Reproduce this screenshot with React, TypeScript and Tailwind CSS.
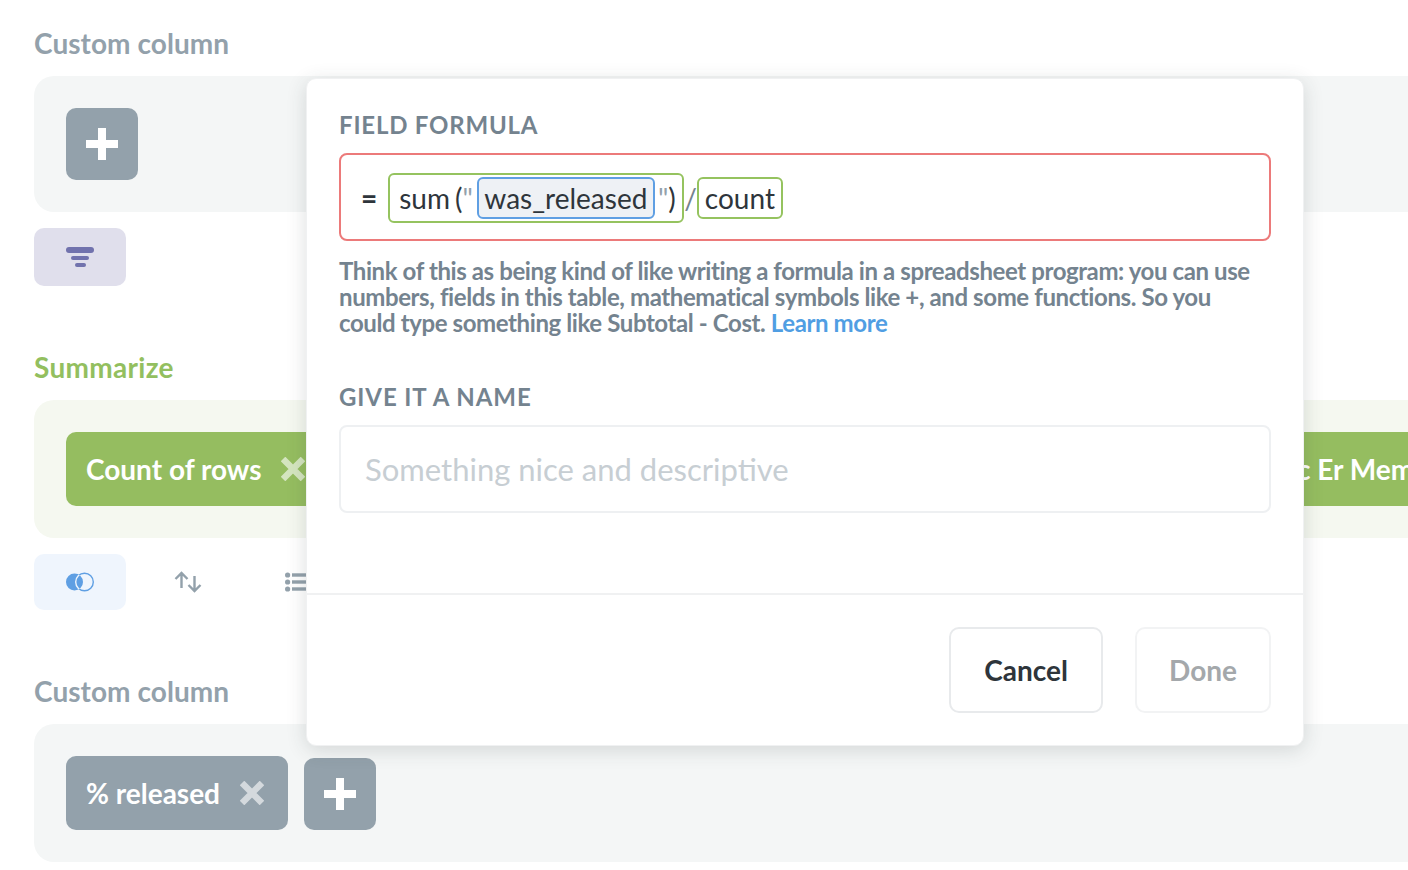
function PlusButton() {
  return (
    <button className="flex h-[72px] w-[72px] shrink-0 items-center justify-center rounded-[10px] bg-[#93a1ab] text-white">
      <svg width="32" height="32" viewBox="0 0 32 32" fill="currentColor">
        <path d="M12 0h8v12h12v8H20v12h-8V20H0v-8h12z" />
      </svg>
    </button>
  );
}

function CloseIcon({ className }: { className: string }) {
  return (
    <svg width="24" height="24" viewBox="0 0 24 24" className={className} fill="none" stroke="currentColor" strokeWidth="6.5">
      <path d="M2 2l20 20M22 2L2 22" />
    </svg>
  );
}

function Chip({ label, color, width }: { label: string; color: string; width: string }) {
  return (
    <div className={`flex h-[74px] shrink-0 items-center rounded-[10px] pl-5 text-[28px] font-bold text-white ${color} ${width}`}>
      <span className="whitespace-nowrap">{label}</span>
      <CloseIcon className="ml-5 shrink-0 text-white/60" />
    </div>
  );
}

function SectionLabel({ children, color }: { children: string; color: string }) {
  return <h2 className={`text-[28px] font-bold leading-8 ${color}`}>{children}</h2>;
}

export default function App() {
  return (
    <div className="relative h-[870px] w-[1408px] overflow-hidden bg-white font-['Lato','Noto_Sans',sans-serif]">
      <div className="flex flex-col pl-[34px] pt-[27px]">
        <SectionLabel color="text-[#93a1ab] tracking-[0.06px]">Custom column</SectionLabel>
        <div className="mt-[17px] h-[136px] rounded-l-[20px] bg-[#f4f6f6] p-8">
          <PlusButton />
        </div>
        <button className="mt-4 flex h-[58px] w-[92px] flex-col items-center justify-center gap-[3px] rounded-[10px] bg-[#e0dfec]">
          <span className="h-[6px] w-7 rounded-full bg-[#7172ad]" />
          <span className="h-1 w-[18px] rounded-full bg-[#7172ad]" />
          <span className="h-1 w-[11px] rounded-full bg-[#7172ad]" />
        </button>

        <div className="mt-[65px]">
          <SectionLabel color="text-[#93bf5f] tracking-[0.3px]">Summarize</SectionLabel>
        </div>
        <div className="mt-[17px] flex h-[138px] gap-4 overflow-hidden rounded-l-[20px] bg-[#f5f8f0] p-8">
          <Chip label="Count of rows" color="bg-[#95bd60]" width="w-[640px]" />
          <div className="flex h-[74px] w-[800px] shrink-0 items-center rounded-[10px] bg-[#95bd60] pl-[575px] text-[28px] font-bold text-white">
            <span className="whitespace-nowrap">c Er Members</span>
          </div>
        </div>
        <div className="mt-4 flex h-14 items-center text-[#93a1ab]">
          <button className="flex h-14 w-[92px] items-center justify-center rounded-[10px] bg-[#eff5fd]">
            <svg width="30" height="20" viewBox="0 0 30 20">
              <defs>
                <clipPath id="venn-left">
                  <circle cx="9.5" cy="10" r="8.5" />
                </clipPath>
              </defs>
              <circle cx="9.5" cy="10" r="8.5" fill="#5f9fe3" />
              <circle cx="19.5" cy="10" r="8.8" fill="none" stroke="#5f9fe3" strokeWidth="1.4" />
              <circle cx="19.5" cy="10" r="8.8" fill="none" stroke="#eff5fd" strokeWidth="1.4" clipPath="url(#venn-left)" />
            </svg>
          </button>
          <button className="ml-4 flex h-14 w-[92px] items-center justify-center">
            <svg width="28" height="22" viewBox="0 0 28 22" fill="none" stroke="currentColor" strokeWidth="2.4">
              <path d="M7.5 17V2M1.5 8l6-6 6 6" />
              <path d="M20.5 5v15M14.5 14l6 6 6-6" />
            </svg>
          </button>
          <svg width="24" height="20" viewBox="0 0 24 20" fill="currentColor" className="ml-[51px]">
            <circle cx="2.6" cy="3" r="2.6" />
            <circle cx="2.6" cy="10" r="2.6" />
            <circle cx="2.6" cy="17" r="2.6" />
            <rect x="7" y="1.3" width="17" height="3.4" />
            <rect x="7" y="8.3" width="17" height="3.4" />
            <rect x="7" y="15.3" width="17" height="3.4" />
          </svg>
        </div>

        <div className="mt-[65px]">
          <SectionLabel color="text-[#93a1ab] tracking-[0.06px]">Custom column</SectionLabel>
        </div>
        <div className="mt-[17px] flex h-[138px] items-end gap-4 rounded-l-[20px] bg-[#f4f6f6] px-8 pb-8">
          <Chip label="% released" color="bg-[#93a1ab]" width="w-[222px]" />
          <PlusButton />
        </div>
      </div>

      <div className="absolute left-[306px] top-[78px] flex h-[668px] w-[998px] flex-col rounded-[10px] border border-[#f0f1f2] bg-white shadow-[0_4px_20px_rgba(46,53,59,0.16)]">
        <div className="px-8 pt-8">
          <label className="block text-[24px] font-bold leading-7 tracking-[0.8px] text-[#74838f]">FIELD FORMULA</label>
          <div className="mt-[14px] flex h-[88px] items-center rounded-[8px] border-2 border-[#ec7a7a] pl-5 pt-[2px] text-[28px] leading-none text-[#2e353b]">
            <span className="font-bold">=</span>
            <div className="ml-[11px] flex h-[50px] w-[296px] items-center rounded-[6px] border-2 border-[#95c35f] pl-[9px]">
              <span>sum</span>
              <span className="ml-[5px] text-[#2e353b]">(</span>
              <span className="text-[#93a1ab]">"</span>
              <span className="ml-1 flex h-[42px] w-[178px] items-center justify-center rounded-[6px] border-2 border-[#5f9fe3] bg-[#eef1f5]">was_released</span>
              <span className="ml-[3px] text-[#93a1ab]">"</span>
              <span>)</span>
            </div>
            <span className="text-[#74838f]">/</span>
            <div className="flex h-[42px] w-[86px] items-center justify-center rounded-[6px] border-2 border-[#95c35f]">count</div>
          </div>
          <p className="mt-[17px] text-[24px] font-bold leading-[26px] tracking-[-0.4px] text-[#74838f]">
            Think of this as being kind of like writing a formula in a spreadsheet program: you can use numbers, fields in this table, mathematical symbols like +, and some functions. So you could type something like Subtotal - Cost. <span className="text-[#509ee3]">Learn more</span>
          </p>
          <label className="mt-[47px] block text-[24px] font-bold leading-7 tracking-[0.9px] text-[#74838f]">GIVE IT A NAME</label>
          <div className="mt-[14px] flex h-[88px] items-center rounded-[8px] border-2 border-[#eef0f2] pl-6 text-[31px] text-[#c7ced3]">
            Something nice and descriptive
          </div>
        </div>
        <div className="mt-[80px] border-t-2 border-[#f0f1f2]" />
        <div className="flex justify-end gap-8 px-8 pt-8">
          <button className="h-[86px] w-[154px] rounded-[10px] border-2 border-[#e8eaec] text-[28px] font-bold text-[#2e353b]">Cancel</button>
          <button className="h-[86px] w-[136px] rounded-[10px] border-2 border-[#f2f3f4] text-[28px] font-bold text-[#a4a8ab]">Done</button>
        </div>
      </div>
    </div>
  );
}
